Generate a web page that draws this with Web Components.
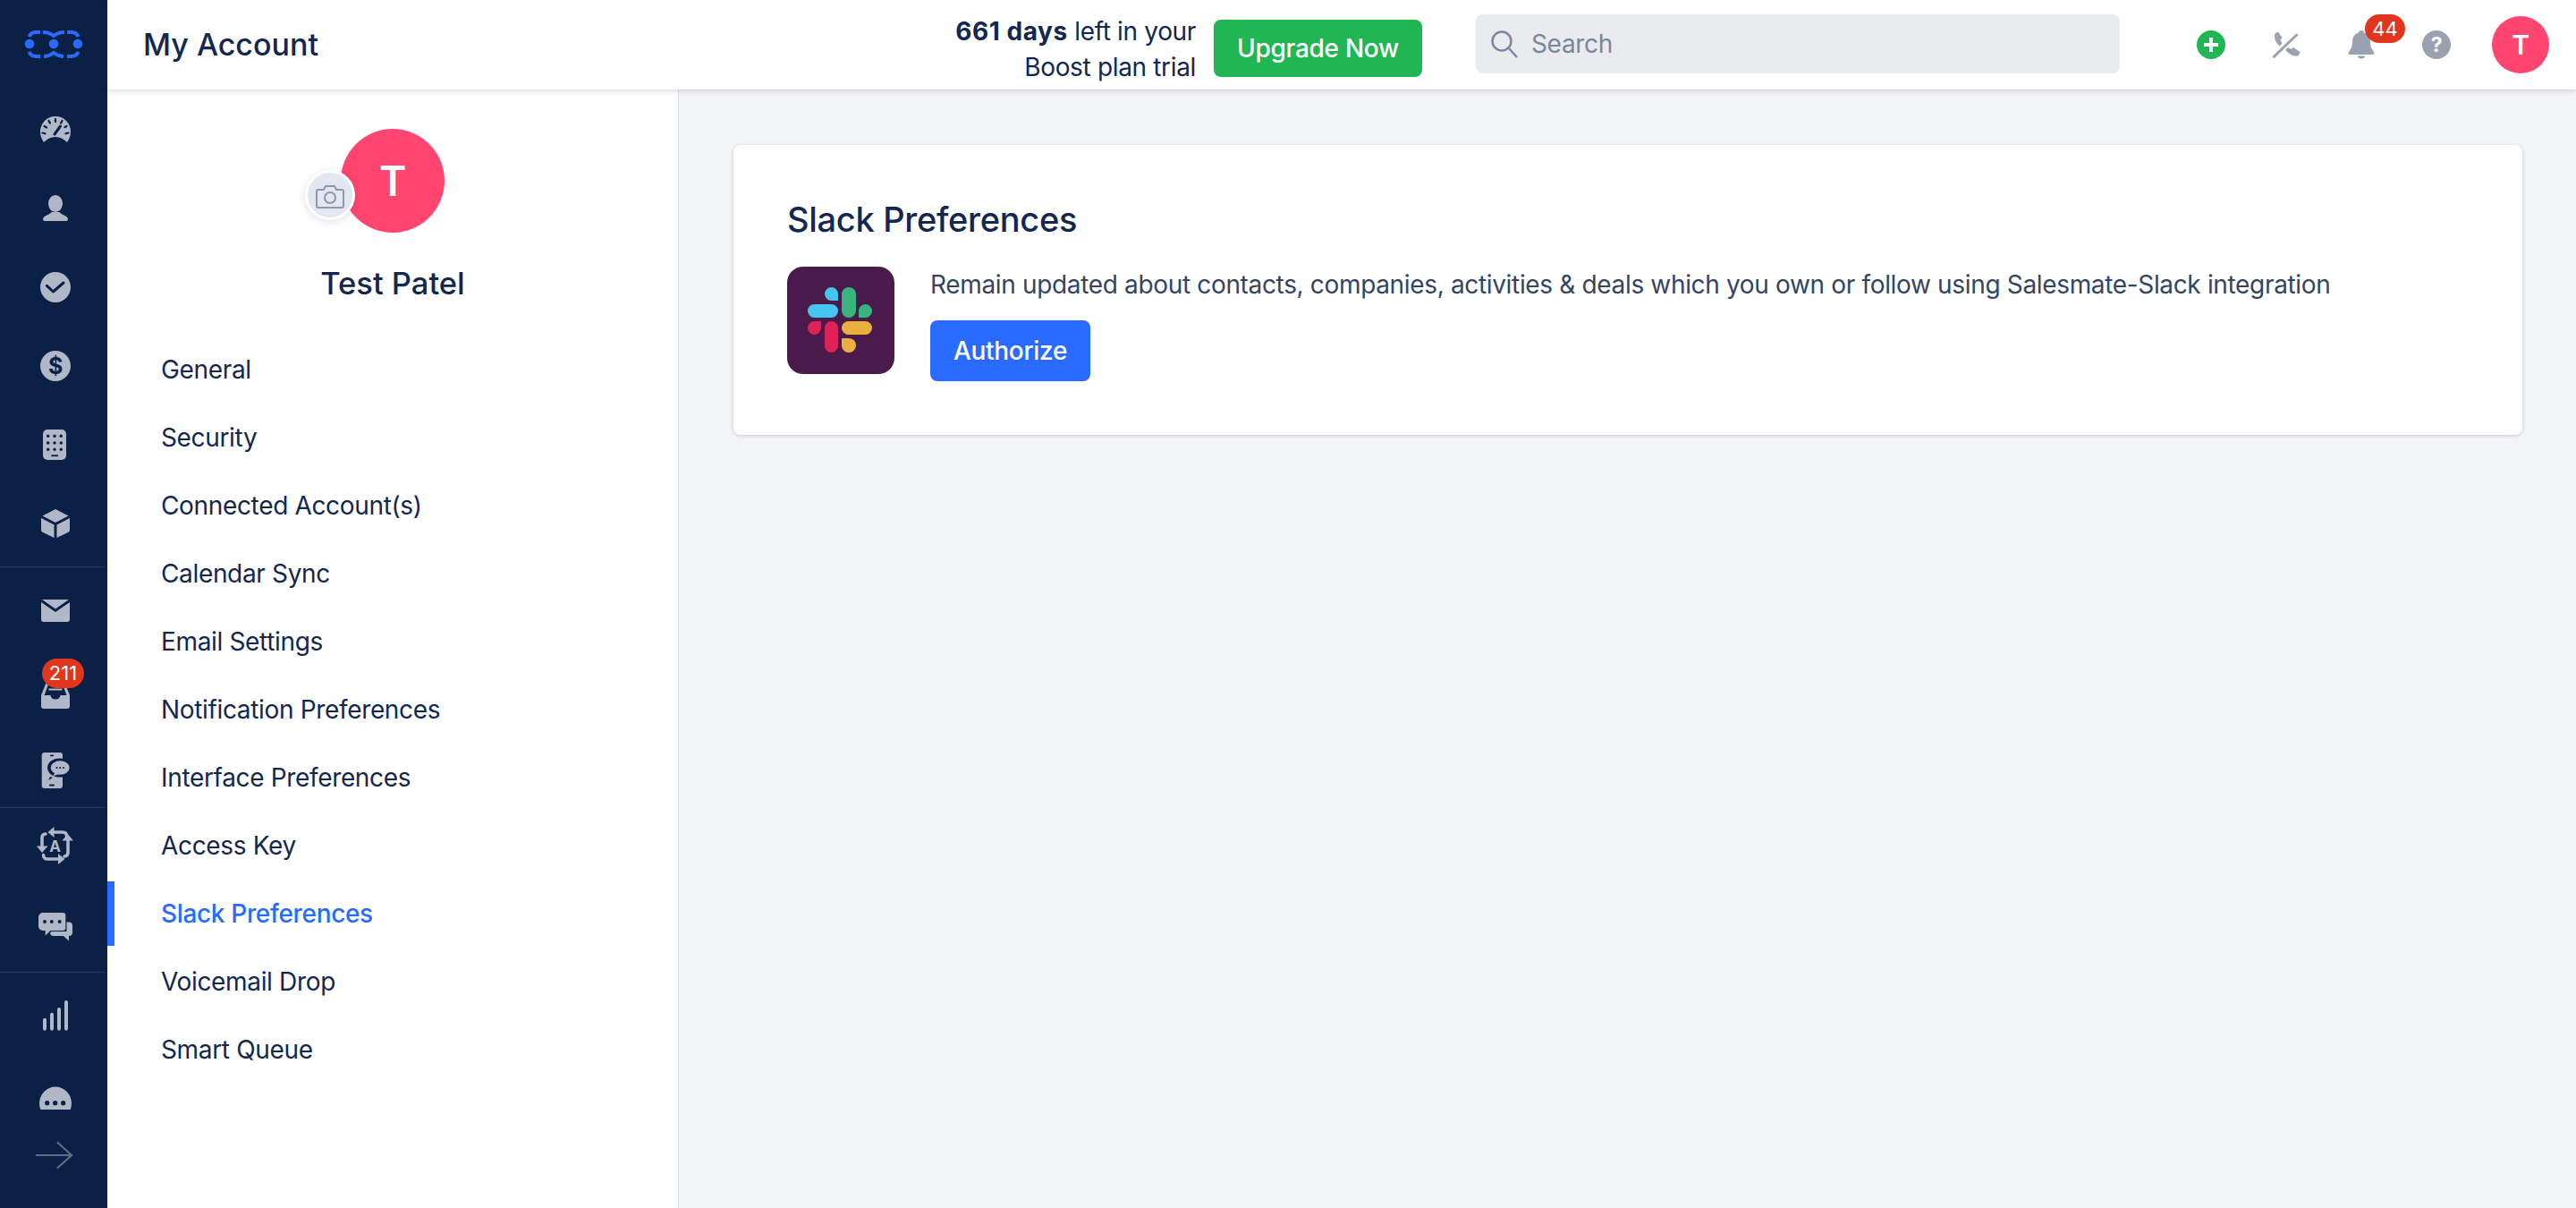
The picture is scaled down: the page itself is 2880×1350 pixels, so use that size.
<!DOCTYPE html>
<html lang="en">
<head>
<meta charset="utf-8">
<title>My Account</title>
<style>
  html, body { margin: 0; height: 100%; background: #f4f5f7; }
  body { font-family: Inter, "Noto Sans", sans-serif; color: #14274e; letter-spacing: -.34px; }
</style>
</head>
<body>
<app-shell>
  <icon-rail slot="rail"></icon-rail>
  <top-bar slot="top" heading="My Account"></top-bar>
  <account-panel slot="panel" name="Test Patel" initial="T">
    <menu-link>General</menu-link>
    <menu-link>Security</menu-link>
    <menu-link>Connected Account(s)</menu-link>
    <menu-link>Calendar Sync</menu-link>
    <menu-link>Email Settings</menu-link>
    <menu-link>Notification Preferences</menu-link>
    <menu-link>Interface Preferences</menu-link>
    <menu-link>Access Key</menu-link>
    <menu-link active>Slack Preferences</menu-link>
    <menu-link>Voicemail Drop</menu-link>
    <menu-link>Smart Queue</menu-link>
  </account-panel>
  <slack-card slot="main"></slack-card>
</app-shell>

<script>
// all rail and toolbar glyphs, drawn on a 44x44 box
const DARK = '#0a2044';
const ICONS = {
  gauge: `<path d="M9 36C6.5 32 5 29 5 24a17 17 0 0 1 34 0c0 5-1.500 8-4 12-4-4-8-6-13-6s-9 2-13 6z"/>
    <g stroke="${DARK}" stroke-width="2.200" stroke-linecap="round" fill="none">
      <path d="M22 10v3M14.500 12l1.500 2.600M29.500 12L28 14.600M9.500 18l2.600 1.500M7.500 25.500l3 .8M36.500 25.500l-3 .8M34.500 18l-2 1.200"/>
      <path d="M21 27l6.500-9" stroke-width="3"/>
    </g>`,
  person: `<ellipse cx="22" cy="16.500" rx="8" ry="9.500"/><path d="M8 34c0-4 7-4.500 9.500-8h9c2.500 3.500 9.500 4 9.500 8a2 2 0 0 1-2 2H10a2 2 0 0 1-2-2z"/>`,
  check: `<circle cx="22" cy="22" r="17"/><path d="M12.400 20.400L19.400 27 31 17" fill="none" stroke="${DARK}" stroke-width="3" stroke-linecap="round" stroke-linejoin="round"/>`,
  dollar: `<circle cx="22" cy="22" r="17"/><text x="22" y="31" text-anchor="middle" font-family="Inter, sans-serif" font-size="25" font-weight="700" fill="${DARK}">$</text>`,
  keypad: `<rect x="8" y="5" width="26" height="34" rx="5"/>
    <g fill="${DARK}">
      <circle cx="13.700" cy="12.300" r="1.700"/><circle cx="21" cy="12.300" r="1.700"/><circle cx="28.300" cy="12.300" r="1.700"/>
      <circle cx="13.700" cy="20" r="1.700"/><circle cx="21" cy="20" r="1.700"/><circle cx="28.300" cy="20" r="1.700"/>
      <circle cx="13.700" cy="27.300" r="1.700"/><circle cx="21" cy="27.300" r="1.700"/><circle cx="28.300" cy="27.300" r="1.700"/>
      <rect x="17.300" y="33.300" width="7.700" height="1.800"/>
    </g>`,
  box: `<path d="M22 6l14.500 7.500L22 21 7.500 13.500z"/><path d="M6 16l14.500 7.500V38L8 32c-1.300-.7-2-1.500-2-3z"/><path d="M38 16l-14.500 7.500V38L36 32c1.300-.7 2-1.500 2-3z"/>`,
  mail: `<path d="M7 10h30L22 20.500z"/><path d="M6 13l16 11 16-11v19a3 3 0 0 1-3 3H9a3 3 0 0 1-3-3z"/>`,
  inbox: `<path d="M12 14h20l6 15v12a3 3 0 0 1-3 3H9a3 3 0 0 1-3-3V29z"/>
    <path d="M14 17h16l4.500 12H27.500c-.5 3-2.500 4.500-5.500 4.500s-5-1.500-5.500-4.500H9.500z" fill="${DARK}"/>
    <rect x="14.500" y="21.500" width="15" height="2" fill="#b0b7c6"/>`,
  phonechat: `<rect x="6.700" y="5" width="23.300" height="40" rx="3"/>
    <rect x="16" y="7.500" width="4" height="1.800" rx=".9" fill="${DARK}"/><rect x="15" y="40.500" width="6" height="2" rx="1" fill="${DARK}"/>
    <ellipse cx="26.500" cy="22" rx="13.500" ry="10.500" fill="${DARK}"/><path d="M19 33l-5 3 2-4z" fill="${DARK}"/>
    <ellipse cx="27.200" cy="22" rx="10.500" ry="7.700"/><path d="M22 27l-3 4.500 7-2.500z"/>
    <g fill="${DARK}"><circle cx="23.500" cy="22" r="1"/><circle cx="27.200" cy="22" r="1"/><circle cx="31" cy="22" r="1"/></g>`,
  translate: `<g fill="none" stroke="#b0b7c6" stroke-width="3.600" stroke-linecap="round">
      <path d="M19 6h11c3 0 4.500 1.500 4.500 4.500"/><path d="M36 15v13c0 3-1.500 5-4 5"/><path d="M26 36H13c-2.500 0-4.500-1.500-4.500-4.500"/><path d="M7 22V12c0-2.500 1.500-4 4-4"/>
    </g>
    <path d="M20.500 0v12L13.500 6zM42 15.500H29.500L35.700 8zM25 30v12l7.500-6zM1 21.500h12.500L7 29z"/>
    <text x="21.500" y="27.500" text-anchor="middle" font-family="Inter, sans-serif" font-size="17" font-weight="700" letter-spacing="0">A</text>`,
  chat: `<path d="M20 18.600h17a4 4 0 0 1 4 4V30a4 4 0 0 1-4 4v5.600L31 34H20a4 4 0 0 1-4-4z"/>
    <path d="M8 6.500h26.500v22.500H17.500l-6.800 6.200V29H8a6 6 0 0 1-6-6V12.500a6 6 0 0 1 6-6z" fill="${DARK}"/>
    <path d="M8 8h22.300a3 3 0 0 1 3 3v14a3 3 0 0 1-3 3H16.500l-5.800 5.600V28H8a5 5 0 0 1-5-5V13a5 5 0 0 1 5-5z"/>
    <g fill="${DARK}"><circle cx="10" cy="18" r="2"/><circle cx="17.800" cy="18" r="2"/><circle cx="26.600" cy="18" r="2"/></g>`,
  bars: `<rect x="8" y="24.800" width="4" height="13.900" rx="2"/><rect x="16" y="18.700" width="4" height="20" rx="2"/><rect x="24" y="13" width="4" height="25.700" rx="2"/><rect x="32" y="5" width="4" height="33.700" rx="2"/>`,
  bubble: `<ellipse cx="22" cy="32" rx="18" ry="18.400"/><g fill="${DARK}"><circle cx="12.700" cy="31.700" r="2.600"/><circle cx="21.700" cy="31.700" r="2.600"/><circle cx="30.700" cy="31.700" r="2.600"/></g>`,
  plus: `<circle cx="22" cy="22" r="16" fill="#20b654"/><path d="M22 14v16M14 22h16" stroke="#fff" stroke-width="4"/>`,
  nocall: `<path d="M9.500 9.500L13 7.500l4.500 6.500-2 2.500 2 4-3 3C10 19 8 14 9.500 9.500z"/><path d="M21 28l3-3 4 2 2-2 7.500 5-1.500 4c-5 2-10-1-15-6z"/><path d="M8.300 35.300L33.700 11" stroke="#9aa1b0" stroke-width="3" stroke-linecap="round"/>`,
  bell: `<path d="M22 6c2 0 3 1 3 2.500 5 1.500 7 5.500 7 10.500 0 6 2 8 4 11 1 3-.5 3-2 3H10c-1.500 0-3 0-2-3 2-3 4-5 4-11 0-5 2-9 7-10.500C19 7 20 6 22 6z"/><path d="M18 34.500h8a4 3 0 0 1-8 0z"/>`,
  help: `<circle cx="22" cy="22" r="16"/><text x="22" y="30" text-anchor="middle" font-family="Inter, sans-serif" font-size="23" font-weight="700" fill="#fff">?</text>`
};

class RailIcon extends HTMLElement {
  constructor() {
    super();
    this.attachShadow({ mode: 'open' });
    const name = this.getAttribute('name');
    const badge = this.getAttribute('badge');
    this.shadowRoot.innerHTML = `
      <style>
        :host { display: flex; align-items: center; justify-content: center; height: 88px; padding-left: 4px; position: relative; flex: none; }
        svg { width: 44px; height: 44px; overflow: visible; display: block; }
        .badge { position: absolute; left: 47px; top: 10px; height: 33px; width: 47px; border-radius: 17px;
          background: #e0361e; color: #fff; font-size: 22px; line-height: 33px; text-align: center; letter-spacing: 0; }
      </style>
      <svg viewBox="0 0 44 44" fill="#b0b7c6">${ICONS[name]}</svg>
      ${badge ? `<span class="badge">${badge}</span>` : ''}`;
  }
}
customElements.define('rail-icon', RailIcon);

class IconRail extends HTMLElement {
  constructor() {
    super();
    this.attachShadow({ mode: 'open' });
    this.shadowRoot.innerHTML = `
      <style>
        :host { display: flex; flex-direction: column; width: 120px; height: 100%; background: ${DARK}; }
        .logo { flex: none; height: 101px; }
        .logo svg, .more svg { display: block; }
        .scroll { flex: 1; min-height: 0; overflow: hidden; }
        .group { display: flex; flex-direction: column; }
        .sep { height: 1px; width: 118px; background: #243858; flex: none; }
        .more { flex: none; height: 110px; }
      </style>
      <div class="logo">
        <svg width="120" height="101" viewBox="0 0 120 101">
          <g fill="#2a6bff"><circle cx="33" cy="49" r="5.300"/><circle cx="60" cy="49" r="5.300"/><circle cx="87" cy="49" r="5.300"/></g>
          <g fill="none" stroke="#2a6bff" stroke-width="4">
            <path d="M45 36h-5c-4 0-6 1.500-7.500 5"/><path d="M48 36c5 0 8 1 12 4 4-3 7-4 12-4"/><path d="M75 36h5c4 0 6 1.500 7.500 5"/>
            <path d="M32.500 58c1.500 3.500 3.500 5 7.500 5h5"/><path d="M49 63c5 0 7-1 11-4 4 3 6 4 11 4"/><path d="M75 63h5c4 0 6-1.500 7.500-5"/>
          </g>
        </svg>
      </div>
      <div class="scroll">
        <div class="group">
          <rail-icon name="gauge"></rail-icon>
          <rail-icon name="person"></rail-icon>
          <rail-icon name="check"></rail-icon>
          <rail-icon name="dollar"></rail-icon>
          <rail-icon name="keypad"></rail-icon>
          <rail-icon name="box"></rail-icon>
        </div>
        <div class="sep" style="margin:4px 0"></div>
        <div class="group">
          <rail-icon name="mail"></rail-icon>
          <rail-icon name="inbox" badge="211"></rail-icon>
          <rail-icon name="phonechat"></rail-icon>
        </div>
        <div class="sep"></div>
        <div class="group" style="margin-top:-1px">
          <rail-icon name="translate"></rail-icon>
          <rail-icon name="chat"></rail-icon>
        </div>
        <div class="sep" style="margin:8px 0 4px"></div>
        <div class="group">
          <rail-icon name="bars"></rail-icon>
          <rail-icon name="bubble"></rail-icon>
        </div>
      </div>
      <div class="more">
        <svg width="120" height="110" viewBox="0 0 120 110">
          <path d="M40 51h40M64 36.500L80 51 64 65.500" fill="none" stroke="#5f6c83" stroke-width="2.200"/>
        </svg>
      </div>`;
  }
}
customElements.define('icon-rail', IconRail);

class TopBar extends HTMLElement {
  constructor() {
    super();
    this.attachShadow({ mode: 'open' });
    const tool = (name, extra = '') => `<div class="tool"><svg viewBox="0 0 44 44" fill="#9aa1b0">${ICONS[name]}</svg>${extra}</div>`;
    this.shadowRoot.innerHTML = `
      <style>
        :host { display: flex; align-items: center; height: 100px; background: #fff; box-shadow: 0 2px 5px rgba(40,50,80,.16); position: relative; z-index: 2; padding: 0 30px 0 40px; box-sizing: border-box; }
        h1 { margin: 0; font-size: 34px; line-height: 44px; font-weight: 500; color: #14274e; flex: none; letter-spacing: 0; }
        .trial { margin: 10px 0 0 auto; text-align: right; font-size: 28px; line-height: 40px; color: #14274e; }
        .trial b { font-weight: 700; letter-spacing: .55px; }
        .upgrade { flex: none; width: 233px; height: 64px; margin: 8px 0 0 20px; border: 0; border-radius: 8px; background: #20b654; color: #fff; font: 500 28px Inter, sans-serif; letter-spacing: -.3px; padding: 0; }
        .search { flex: none; width: 720px; height: 66px; margin: -2px 0 0 60px; border-radius: 8px; background: #e9ebef; display: flex; align-items: center; gap: 14px; padding-left: 16px; box-sizing: border-box; color: #7a869a; font-size: 28px; }
        .tools { flex: none; display: flex; align-items: center; margin-left: 60px; }
        .tool { width: 84px; height: 44px; display: flex; justify-content: center; position: relative; }
        .tool svg { width: 44px; height: 44px; display: block; }
        .count { position: absolute; left: 46px; top: -12px; width: 45px; height: 32px; border-radius: 16px; background: #e0361e; color: #fff; font-size: 22px; line-height: 32px; text-align: center; letter-spacing: 0; }
        .me { flex: none; width: 64px; height: 64px; margin-left: 20px; border-radius: 50%; background: #ff4570; color: #fff; font-size: 30px; font-weight: 600; line-height: 64px; text-align: center; }
      </style>
      <h1>${this.getAttribute('heading')}</h1>
      <div class="trial"><b>661 days</b> left in your<br>Boost plan trial</div>
      <button class="upgrade">Upgrade Now</button>
      <div class="search">
        <svg width="32" height="32" viewBox="0 0 32 32" fill="none" stroke="#7d879c" stroke-width="2.500"><circle cx="13" cy="13" r="10.500"/><path d="M21 21l9 10"/></svg>
        <span>Search</span>
      </div>
      <div class="tools">
        ${tool('plus')}${tool('nocall')}${tool('bell', '<span class="count">44</span>')}${tool('help')}
      </div>
      <div class="me">T</div>`;
  }
}
customElements.define('top-bar', TopBar);

class MenuLink extends HTMLElement {
  constructor() {
    super();
    this.attachShadow({ mode: 'open' });
    this.shadowRoot.innerHTML = `
      <style>
        :host { display: flex; align-items: center; height: 72px; padding-left: 60px; font-size: 28px; color: #14274e; }
        :host([active]) { color: #2a6bff; font-weight: 500; box-shadow: inset 8px 0 0 #2a6bff; }
      </style>
      <slot></slot>`;
  }
}
customElements.define('menu-link', MenuLink);

class AccountPanel extends HTMLElement {
  constructor() {
    super();
    this.attachShadow({ mode: 'open' });
    this.shadowRoot.innerHTML = `
      <style>
        :host { display: flex; flex-direction: column; width: 639px; box-sizing: border-box; height: 100%; background: #fff; border-right: 1px solid #dcdfe5; padding-top: 44px; flex: none; }
        .photo { position: relative; width: 116px; height: 116px; margin: 0 auto; border-radius: 50%; background: #ff4570; color: #fff; font-size: 46px; font-weight: 600; line-height: 116px; text-align: center; }
        .camera { position: absolute; left: -40px; top: 46px; width: 50px; height: 50px; border: 3px solid #fff; border-radius: 50%; background: #e3e7f0; box-shadow: 0 2px 8px rgba(40,50,80,.14); display: flex; align-items: center; justify-content: center; }
        .camera svg { margin-top: 3px; }
        .name { margin-top: 35px; font-size: 34.500px; line-height: 44px; font-weight: 500; text-align: center; color: #14274e; letter-spacing: 0; }
        nav { display: flex; flex-direction: column; gap: 4px; margin-top: 38px; }
      </style>
      <div class="photo">${this.getAttribute('initial')}
        <div class="camera">
          <svg width="32" height="28" viewBox="0 0 32 28" fill="none" stroke="#8d97ad" stroke-width="2" stroke-linejoin="round"><path d="M3 6h6l2-4h10l2 4h6a2 2 0 0 1 2 2v16a2 2 0 0 1-2 2H3a2 2 0 0 1-2-2V8a2 2 0 0 1 2-2z"/><circle cx="16" cy="15" r="6"/></svg>
        </div>
      </div>
      <div class="name">${this.getAttribute('name')}</div>
      <nav><slot></slot></nav>`;
  }
}
customElements.define('account-panel', AccountPanel);

class SlackCard extends HTMLElement {
  constructor() {
    super();
    this.attachShadow({ mode: 'open' });
    this.shadowRoot.innerHTML = `
      <style>
        :host { display: block; background: #fff; border-radius: 8px; box-shadow: 0 1px 4px rgba(40,50,80,.22); padding: 60px; }
        h2 { margin: 0 0 30px; font-size: 38px; line-height: 46px; font-weight: 500; color: #14274e; letter-spacing: -.3px; }
        .row { display: flex; gap: 40px; }
        .logo { flex: none; width: 120px; height: 120px; border-radius: 18px; background: #4a1a4a; }
        .logo svg { display: block; }
        p { margin: 0 0 20px; font-size: 28px; line-height: 40px; color: #344563; }
        button { display: block; width: 179px; height: 68px; padding: 0; border: 0; border-radius: 8px; background: #2a6bff; color: #fff; font: 500 28px Inter, sans-serif; letter-spacing: -.3px; }
      </style>
      <h2>Slack Preferences</h2>
      <div class="row">
        <div class="logo">
          <svg width="120" height="120" viewBox="0 0 120 120">
            <g fill="#45c5ef"><path d="M57 38h-7.500a7.500 7.500 0 1 1 7.500-7.500z"/><rect x="23" y="42" width="34" height="15" rx="7.500"/></g>
            <g fill="#38b47e"><rect x="61" y="23" width="16" height="34" rx="8"/><path d="M80 57v-7.500a7.500 7.500 0 1 1 7.500 7.500z"/></g>
            <g fill="#df2059"><path d="M38 61v7.500a7.500 7.500 0 1 1-7.500-7.500z"/><rect x="42" y="61" width="15" height="35" rx="7.500"/></g>
            <g fill="#e9b03e"><rect x="61" y="61" width="34" height="15" rx="7.500"/><path d="M61 80h8a8 8 0 1 1-8 8z"/></g>
          </svg>
        </div>
        <div>
          <p>Remain updated about contacts, companies, activities &amp; deals which you own or follow using Salesmate-Slack integration</p>
          <button>Authorize</button>
        </div>
      </div>`;
  }
}
customElements.define('slack-card', SlackCard);

class AppShell extends HTMLElement {
  constructor() {
    super();
    this.attachShadow({ mode: 'open' });
    this.shadowRoot.innerHTML = `
      <style>
        :host { display: flex; height: 100vh; overflow: hidden; }
        .right { flex: 1; min-width: 0; display: flex; flex-direction: column; }
        .body { flex: 1; min-height: 0; display: flex; }
        main { flex: 1; min-width: 0; padding: 62px 60px 0 61px; box-sizing: border-box; }
      </style>
      <slot name="rail"></slot>
      <div class="right">
        <slot name="top"></slot>
        <div class="body">
          <slot name="panel"></slot>
          <main><slot name="main"></slot></main>
        </div>
      </div>`;
  }
}
customElements.define('app-shell', AppShell);
</script>
</body>
</html>
